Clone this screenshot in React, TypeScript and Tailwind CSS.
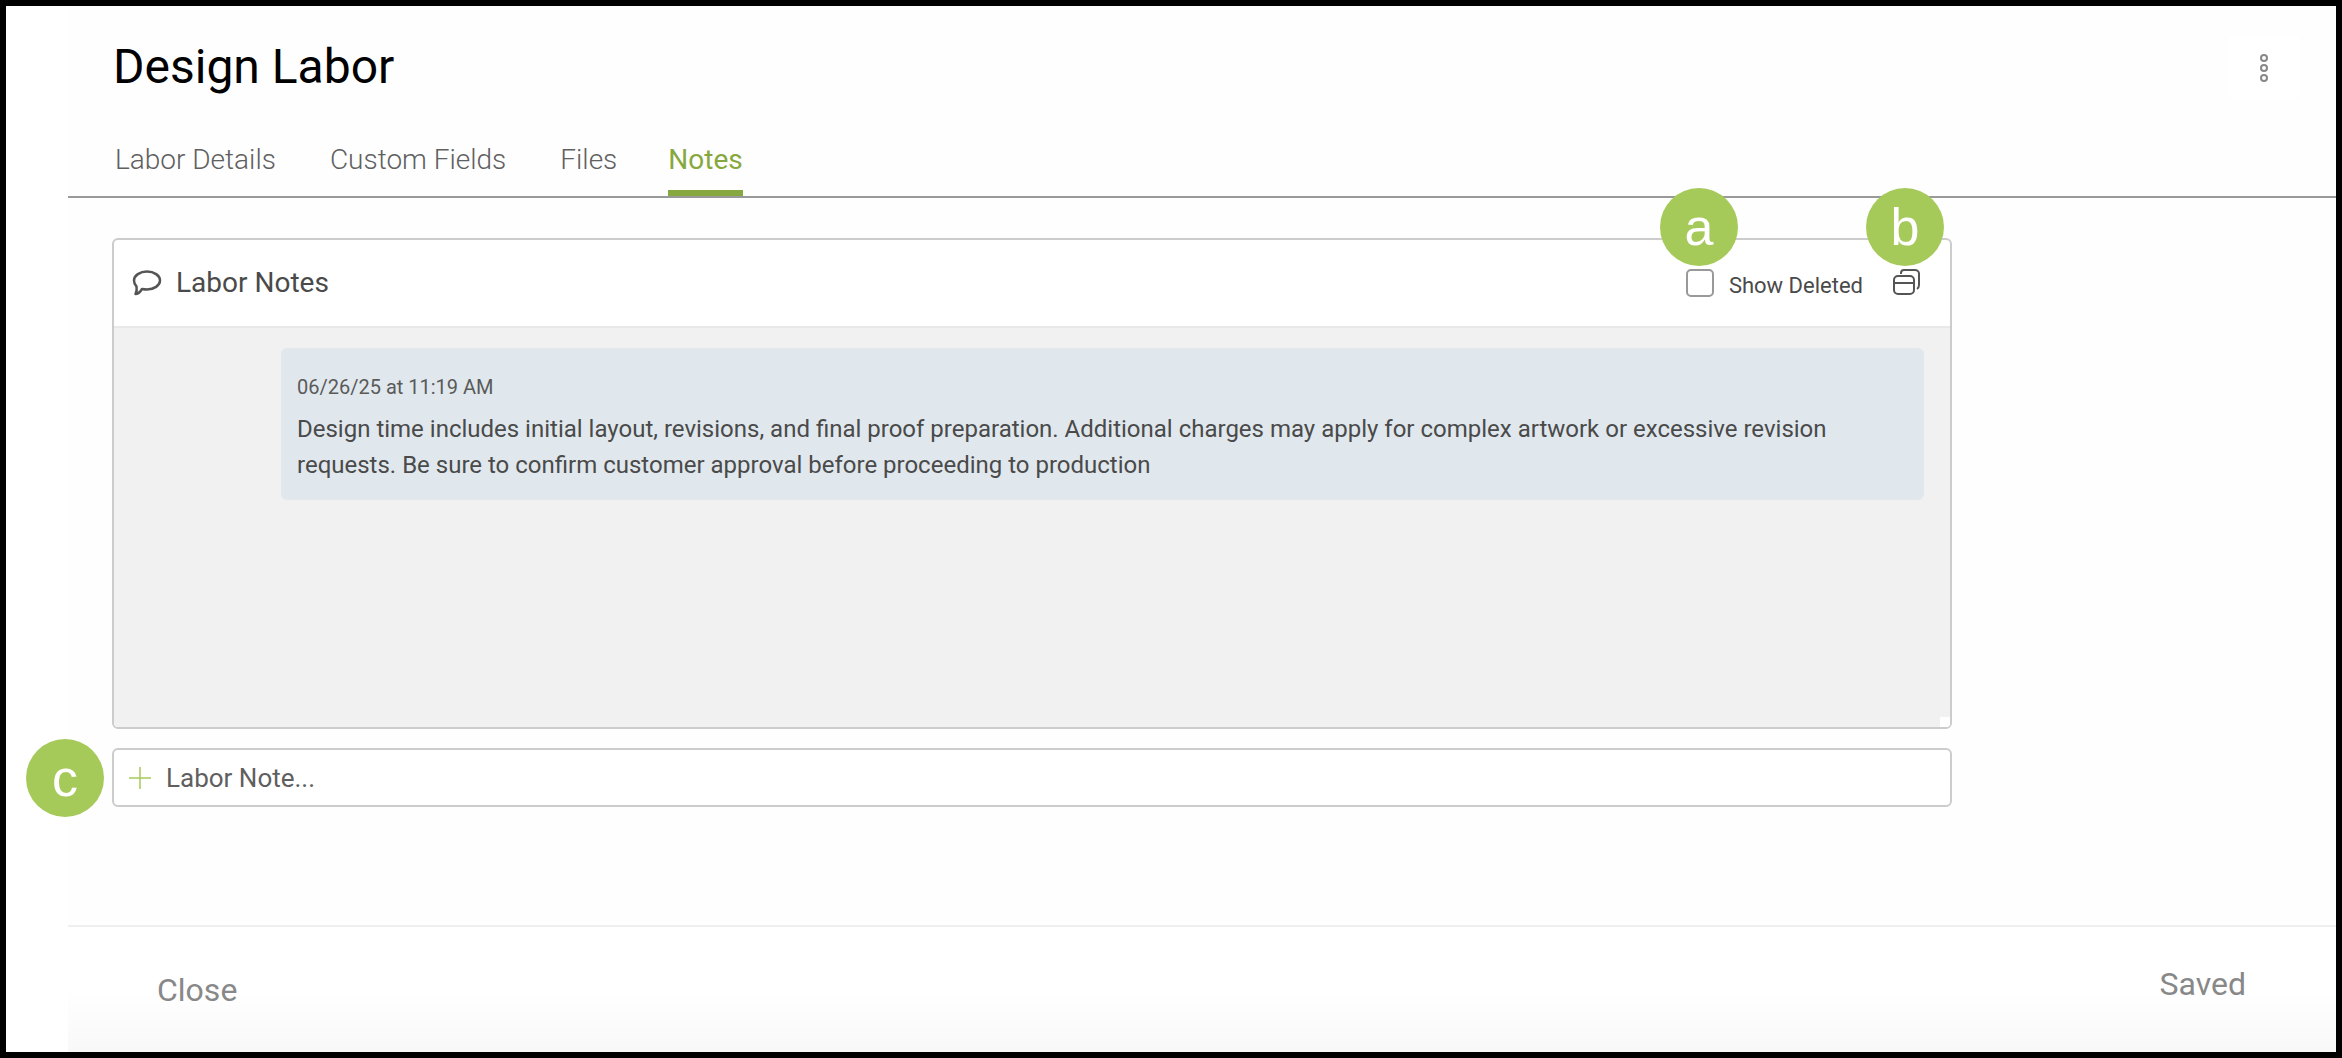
export default function App() {
  const roboto = { fontFamily: 'Roboto, sans-serif' };
  const badge = { fontFamily: '"Liberation Sans", Arial, sans-serif' };
  return (
    <div style={roboto} className="relative w-full h-[1058px] bg-black p-[6px] overflow-hidden">
      <div className="relative flex h-full w-full bg-white pl-[62px]">
        <div className="flex flex-col flex-1 bg-[#fefefe]">
          <div className="flex items-start justify-between pl-[45px] pr-[37px] h-[92px]">
            <h1 className="mt-[36px] text-[48px] leading-[50px] text-black font-normal">Design Labor</h1>
            <div className="mt-[30px] flex flex-col gap-[2px] items-center w-[70px] h-[62px] pt-[18px] bg-white">
              <span className="w-[8px] h-[8px] rounded-full border-[2px] border-[#888888]" />
              <span className="w-[8px] h-[8px] rounded-full border-[2px] border-[#888888]" />
              <span className="w-[8px] h-[8px] rounded-full border-[2px] border-[#888888]" />
            </div>
          </div>
          <div className="flex gap-[54px] pl-[47px] h-[100px] pt-[44px] border-b-[2px] border-[#999999]">
            <span className="text-[28px] leading-[36px] font-light text-[#606060]">Labor Details</span>
            <span className="text-[28px] leading-[36px] font-light text-[#606060]">Custom Fields</span>
            <span className="text-[28px] leading-[36px] font-light text-[#606060]">Files</span>
            <span className="-ml-[3px] text-[28px] leading-[36px] text-[#86a83f] h-[54px] border-b-[6px] border-[#86a83f]">Notes</span>
          </div>
          <div className="pl-[44px] pt-[40px] w-[1884px]">
            <div className="h-[491px] border-[2px] border-[#cccccc] rounded-[6px] flex flex-col overflow-hidden bg-white">
              <div className="h-[88px] flex items-center justify-between pl-[18px] pr-[30px] border-b-[2px] border-[#e8e8e8]">
                <div className="flex items-center gap-[14px]">
                  <svg width="30" height="26" viewBox="0 0 30 26" fill="none" stroke="#555555" strokeWidth="2.5">
                    <path d="M15 1.500C22 1.500 28 5.500 28 10.500C28 15.500 22 19.500 15 19.500C13 19.500 11.500 19.300 10 19C8.500 21.500 6 24 3.500 24C4.500 22 5 19 4.500 16.500C3 15 2 13 2 10.500C2 5.500 8 1.500 15 1.500Z" strokeLinejoin="round" />
                  </svg>
                  <span className="text-[28px] leading-[32px] text-[#4a4a4a]">Labor Notes</span>
                </div>
                <div className="flex items-center">
                  <span className="w-[28px] h-[28px] border-[2px] border-[#999999] rounded-[5px] bg-white mr-[15px]" />
                  <span className="text-[22px] leading-[28px] text-[#4a4a4a] mt-[6px]">Show Deleted</span>
                  <svg className="ml-[30px] -mt-[4px]" width="27" height="27" viewBox="0 0 27 27" fill="none" stroke="#555555" strokeWidth="2">
                    <rect x="1" y="8" width="20" height="18" rx="4" />
                    <path d="M1 15H21" />
                    <path d="M8 6V5C8 3 9 2 11 2H22C24 2 26 3.500 26 5.500V17C26 19 25.500 20 24 21" />
                  </svg>
                </div>
              </div>
              <div className="relative flex-1 bg-[#f1f1f1] pt-[20px] pl-[167px] pr-[26px]">
                <div className="h-[152px] bg-[#e0e8ed] rounded-[6px] pl-[16px] pr-[16px] pt-[24px]">
                  <div className="text-[20px] leading-[30px] text-[#5a5a5a]">06/26/25 at 11:19 AM</div>
                  <p className="mt-[9px] text-[24px] leading-[36px] text-[#4a4a4a]">
                    Design time includes initial layout, revisions, and final proof preparation. Additional charges may apply for complex artwork or excessive revision requests. Be sure to confirm customer approval before proceeding to production
                  </p>
                </div>
                <span className="absolute right-0 bottom-0 w-[10px] h-[10px] bg-white" />
              </div>
            </div>
            <div className="mt-[19px] h-[59px] border-[2px] border-[#cccccc] rounded-[6px] bg-white flex items-center pl-[14px]">
              <svg width="24" height="24" viewBox="0 0 24 24" stroke="#a6ca5a" strokeWidth="1.500">
                <path d="M12 1V23M1 12H23" />
              </svg>
              <span className="ml-[14px] text-[26px] leading-[30px] text-[#5f5f5f]">Labor Note...</span>
            </div>
          </div>
          <div className="flex-1" />
          <div className="h-[127px] border-t-[2px] border-[#efefef] bg-gradient-to-b from-[#ffffff] via-[#ffffff] to-[#f8f8f8] flex justify-between pl-[89px] pr-[90px]">
            <span className="mt-[44px] text-[32px] leading-[38px] text-[#888888]">Close</span>
            <span className="mt-[38px] text-[32px] leading-[38px] text-[#888888]">Saved</span>
          </div>
        </div>
      </div>
      <span style={badge} className="absolute left-[1660px] top-[188px] w-[78px] h-[78px] rounded-full bg-[#a6ca5a] text-white flex items-center justify-center text-[52px] leading-none">a</span>
      <span style={badge} className="absolute left-[1866px] top-[188px] w-[78px] h-[78px] rounded-full bg-[#a6ca5a] text-white flex items-center justify-center text-[52px] leading-none">b</span>
      <span style={badge} className="absolute left-[26px] top-[739px] w-[78px] h-[78px] rounded-full bg-[#a6ca5a] text-white flex items-center justify-center text-[52px] leading-none">c</span>
    </div>
  );
}
